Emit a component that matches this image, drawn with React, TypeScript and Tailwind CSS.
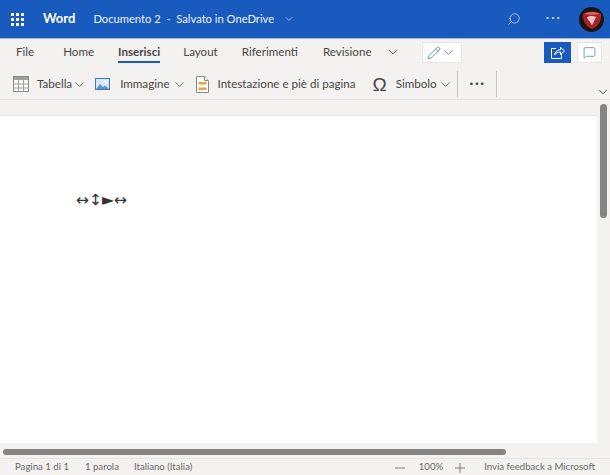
import { ChevronDown, Minus, Plus, Pencil, Search, MessageSquare } from 'lucide-react';

const font = { fontFamily: 'Lato, "Liberation Sans", sans-serif' };

function Waffle() {
  const dots = [0, 1, 2, 3, 4, 5, 6, 7, 8];
  return (
    <div className="grid grid-cols-3 gap-[2px] w-[13px]">
      {dots.map((d) => (
        <div key={d} className="w-[3px] h-[3px] bg-white" />
      ))}
    </div>
  );
}

function TableIcon() {
  return (
    <svg width="16" height="16" viewBox="0 0 16 16" className="shrink-0">
      <rect x="0.5" y="0.5" width="15" height="15" fill="#fafafa" stroke="#8a8886" />
      <rect x="1" y="1" width="14" height="3" fill="#a19f9d" />
      <path d="M0.5 8h15M0.5 12h15M5.5 4v12M10.5 4v12" stroke="#a19f9d" strokeWidth="1" fill="none" />
    </svg>
  );
}

function PictureIcon() {
  return (
    <svg width="15" height="12" viewBox="0 0 15 12" className="shrink-0">
      <rect x="0.5" y="0.5" width="14" height="11" fill="#d6e8f8" stroke="#3f79b5" />
      <path d="M1 11l4-5 3 3 2-1.5 4 3.5z" fill="#5b93c9" />
      <circle cx="10.5" cy="3.5" r="1.3" fill="#f7f9fc" />
    </svg>
  );
}

function HeaderIcon() {
  return (
    <svg width="13" height="17" viewBox="0 0 13 17" className="shrink-0">
      <path d="M0.5 0.5h8l4 4v12h-12z" fill="#fff" stroke="#8a8886" />
      <path d="M8.5 0.5v4h4" fill="#f3f2f1" stroke="#8a8886" />
      <rect x="2.5" y="6" width="8" height="2.5" fill="#e8a33a" />
      <rect x="2.5" y="11.5" width="8" height="2.5" fill="#e8a33a" />
    </svg>
  );
}

function ShareIcon() {
  return (
    <svg width="15" height="15" viewBox="0 0 15 15" fill="none" stroke="#fff" strokeWidth="1">
      <path d="M6 3.5H1.5v10h10V9" />
      <path d="M4.5 10c.5-3.5 3-5.2 6-5.2V2.3l4 3.6-4 3.6V7c-2.5 0-4.5.8-6 3z" />
    </svg>
  );
}

function Avatar() {
  return (
    <div className="w-[25px] h-[25px] rounded-full bg-[#1a1414] flex items-center justify-center">
      <svg width="20" height="21" viewBox="0 0 20 21">
        <path d="M1 5C3 1.5 17 1.5 19 5c.5 7-2.500 12.500-9 15C3.500 17.500.5 12 1 5z" fill="#a82328" />
        <path d="M2.500 5C6 2.800 14 2.800 17.500 5 13.500 6 6.500 6 2.500 5z" fill="#dc6a63" />
        <path d="M5 8.500c1.500-1.500 4-1.800 6-1.500l3.500 1c-1 1-1.500 2-2.200 3.500-.8 1.700-1.300 3.500-2.300 4.500-1-1-1.500-2.500-2.500-3.500C6.300 11.300 5.500 10 5 8.500z" fill="#e8c4c0" />
      </svg>
    </div>
  );
}

function Tab({ label, active, className }: { label: string; active?: boolean; className: string }) {
  return (
    <div className={`relative h-[20px] flex items-center text-[11.6px] text-[#484644] ${className}`}>
      {label}
      {active && <div className="absolute left-0 right-0 -bottom-[1px] h-[2px] bg-[#185abd]" />}
    </div>
  );
}

export default function App() {
  return (
    <div style={font} className="w-[610px] h-[475px] flex flex-col overflow-hidden bg-[#f3f2f1]">
      {/* Title bar */}
      <div className="h-[38px] bg-[#185abd] flex items-center text-white shrink-0">
        <div className="ml-[11px]"><Waffle /></div>
        <div className="ml-[19px] text-[13px] font-bold">Word</div>
        <div className="ml-[18px] text-[11.2px] text-[#eef3fb] whitespace-pre">Documento 2  -  Salvato in OneDrive</div>
        <ChevronDown className="ml-[9px] w-[12px] h-[12px] text-[#c5d6ef]" strokeWidth={1.5} />
        <Search className="ml-auto w-[14px] h-[14px] -scale-x-100 text-[#d5e1f3]" strokeWidth={1.25} />
        <div className="ml-[25px] text-[13px] leading-none tracking-[2px] -mt-[3px] text-[#d5e1f3]">···</div>
        <div className="ml-[17px] mr-[6px]"><Avatar /></div>
      </div>
      <div className="h-[1px] bg-[#9db9e6] shrink-0" />

      {/* Tabs row */}
      <div className="h-[30px] flex items-start pt-[3px] shrink-0">
        <Tab label="File" className="ml-[16px]" />
        <Tab label="Home" className="ml-[29px]" />
        <Tab label="Inserisci" active className="ml-[24px] font-bold" />
        <Tab label="Layout" className="ml-[23px]" />
        <Tab label="Riferimenti" className="ml-[24px]" />
        <Tab label="Revisione" className="ml-[25px]" />
        <ChevronDown className="ml-[13px] mt-[2px] w-[16px] h-[16px] text-[#484644]" strokeWidth={1.25} />
        <div className="ml-[21px] w-[40px] h-[21px] bg-white border border-[#e6e5e4] flex items-center justify-center">
          <Pencil className="w-[14px] h-[14px] text-[#3c6cb4]" strokeWidth={1.25} />
          <ChevronDown className="w-[15px] h-[15px] text-[#3c6cb4]" strokeWidth={1.25} />
        </div>
        <div className="ml-[82px] w-[27px] h-[21px] bg-[#185abd] flex items-center justify-center">
          <ShareIcon />
        </div>
        <div className="ml-[6px] w-[25px] h-[21px] bg-white border border-[#e6e5e4] flex items-center justify-center">
          <MessageSquare className="w-[13px] h-[13px] text-[#3c6cb4]" strokeWidth={1.25} />
        </div>
      </div>

      {/* Toolbar row */}
      <div className="h-[30px] flex items-center text-[11.6px] text-[#484644] shrink-0 relative">
        <div className="ml-[13px]"><TableIcon /></div>
        <span className="ml-[8px]">Tabella</span>
        <ChevronDown className="w-[15px] h-[15px]" strokeWidth={1.25} />
        <div className="ml-[8px]"><PictureIcon /></div>
        <span className="ml-[10px]">Immagine</span>
        <ChevronDown className="ml-[2px] w-[15px] h-[15px]" strokeWidth={1.25} />
        <div className="ml-[9px]"><HeaderIcon /></div>
        <span className="ml-[9px]">Intestazione e piè di pagina</span>
        <span className="ml-[17px] text-[19px] leading-none" style={{ fontFamily: '"Liberation Sans", sans-serif' }}>Ω</span>
        <span className="ml-[9px]">Simbolo</span>
        <ChevronDown className="ml-[1px] w-[15px] h-[15px]" strokeWidth={1.25} />
        <div className="ml-[4px] w-[1px] h-[26px] bg-[#c8c6c4]" />
        <div className="ml-[12px] text-[14px] font-bold leading-none tracking-[1.5px] -mt-[3px]">···</div>
        <div className="ml-[10px] w-[1px] h-[26px] bg-[#c8c6c4]" />
        <ChevronDown className="absolute right-0 bottom-[0px] w-[14px] h-[14px] text-[#323130]" strokeWidth={1.5} />
      </div>

      {/* Document area */}
      <div className="flex-1 min-h-0 flex border-t border-[#e4e3e2]">
        <div className="flex-1 min-w-0 flex flex-col">
          <div className="h-[15px] bg-[#f3f2f1] shrink-0" />
          <div className="flex-1 bg-white border-t border-[#e6e5e4] pl-[76px] pt-[75px]">
            <div className="text-[15.5px] leading-[18px] text-[#333]" style={{ fontFamily: '"DejaVu Sans ExtraLight", "DejaVu Sans", sans-serif' }}>
              ↔↕►↔
            </div>
          </div>
          <div className="h-[15px] shrink-0 flex items-center pl-[3px] pt-[2px]">
            <div className="w-[503px] h-[6px] rounded-full bg-[#858585]" />
          </div>
        </div>
        <div className="w-[13px] shrink-0 pl-[3px] pt-[4px]">
          <div className="w-[7px] h-[114px] rounded-full bg-[#858585]" />
        </div>
      </div>

      {/* Status bar */}
      <div className="h-[17px] border-t border-[#e4e3e2] flex items-center pt-[1px] text-[9.6px] text-[#6b6967] shrink-0">
        <span className="ml-[15px]">Pagina 1 di 1</span>
        <span className="ml-[16px]">1 parola</span>
        <span className="ml-[15px]">Italiano (Italia)</span>
        <Minus className="ml-auto w-[16px] h-[16px]" strokeWidth={1.25} />
        <span className="ml-[11px]">100%</span>
        <Plus className="ml-[9px] w-[16px] h-[16px]" strokeWidth={1.25} />
        <span className="ml-[16px] mr-[15px]">Invia feedback a Microsoft</span>
      </div>
    </div>
  );
}
